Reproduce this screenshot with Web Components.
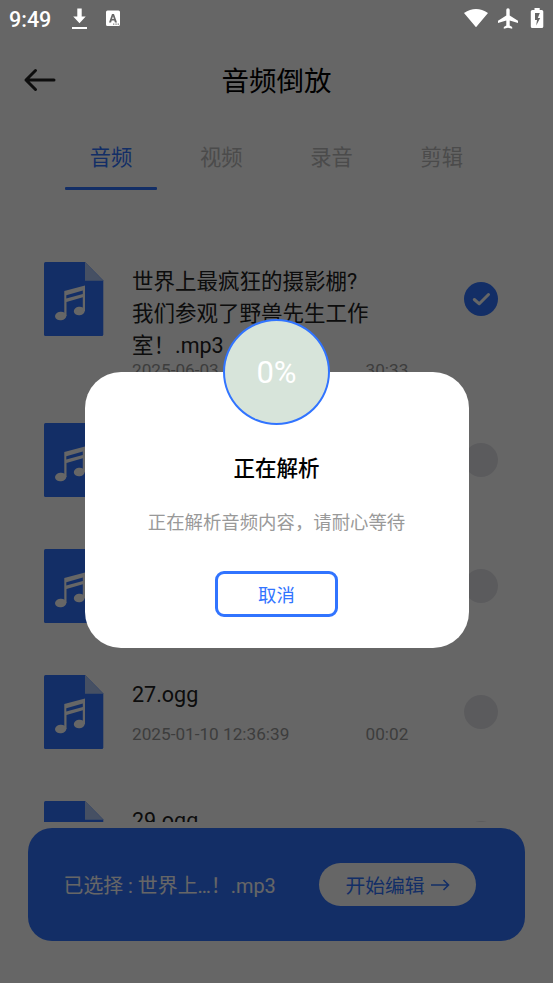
<!DOCTYPE html>
<html lang="zh-CN">
<head>
<meta charset="utf-8">
<title>音频倒放</title>
<style>
body{margin:0;background:#fff}
</style>
</head>
<body>
<audio-app></audio-app>
<script>
const define=(name,html)=>{
  const t=document.createElement('template');
  t.innerHTML=html;
  customElements.define(name,class extends HTMLElement{
    constructor(){super();this.attachShadow({mode:'open'}).appendChild(t.content.cloneNode(true));}
  });
};

define('status-bar',`<style>
:host{display:flex;height:37px;box-sizing:border-box;color:#fff;position:absolute;inset:0 0 auto 0;z-index:3;padding:0 9px 0 9px;font-size:21.5px;font-weight:500;line-height:40px}
span{width:61px;white-space:nowrap}
.gap{flex:1}
svg{display:block;fill:#fff;flex:none}
</style><span>9:49</span>
<svg width="60" height="37" viewBox="0 0 60 37"><path d="M7.300 8.500h4.400v8h4L9.500 23.300 3.200 16.500h4.100zM2 27h15v2H2z"/><path fill-rule="evenodd" d="M37.500 10.500h11q1.500 0 1.500 1.500v12.500q0 1.500-1.500 1.500h-11q-1.500 0-1.500-1.500v-12.500q0-1.500 1.500-1.500zM42 14l-3 8.500h2.100l.6-1.900h2.600l.6 1.900h2.100l-3-8.500zM43 16.200l.9 2.800h-1.800zM43.200 23.500v1.200h1.100v-1.200zM45.500 23.500v1.200h1.100v-1.200zM47.700 23.500v1.200h1.100v-1.200z"/></svg>
<div class="gap"></div>
<svg width="84" height="37" viewBox="460 0 84 37"><path d="M464 13Q476 4.800 488 13L476 27.300zM508 8.200c1.100 0 1.700.8 1.700 1.900v5.500l8.300 5.200v2.100l-8.300-2.500v5l2.500 1.700v1.700l-4.200-1.100-4.200 1.100v-1.700l2.500-1.700v-5l-8.300 2.500v-2.100l8.300-5.200v-5.500c0-1.100.6-1.900 1.700-1.900z"/><path fill-rule="evenodd" d="M534.500 8h5.200v2h2q1.600 0 1.600 1.600V26.400q0 1.600-1.600 1.600h-9.300q-1.600 0-1.600-1.600V11.600q0-1.600 1.600-1.600h2.100zM535 13v7h2l-.8 5.500 4-7.500h-2.400l2-5z"/></svg>`);

define('app-header',`<style>
:host{display:grid;grid-template-columns:80px 1fr 80px;align-items:center;height:86px;padding-top:37px}
h1{margin:0;padding-top:3px;font-size:27.500px;font-weight:400;line-height:40px;text-align:center;color:#000}
svg{display:block}
</style><svg width="80" height="40" viewBox="0 0 80 40" fill="none" stroke="#222" stroke-width="3" stroke-linecap="round" stroke-linejoin="round"><path d="M54 20H26M35.500 10.500L26 20l9.500 9.500"/></svg><h1><slot></slot></h1>`);

define('tab-bar',`<style>:host{display:flex;padding:0 56px;height:80px}</style><slot></slot>`);
define('tab-item',`<style>
:host{display:flex;flex-direction:column;align-items:center;flex:1;font-size:21.300px;line-height:32px;color:#bbb}
:host([active]){color:#3174ff}
i{width:92px;height:3px;margin-top:13px;border-radius:1px}
:host([active]) i{background:#3174ff}
span{margin-top:19px}
</style><span><slot></slot></span><i></i>`);

define('file-list',`<style>:host{display:flex;flex-direction:column;height:619px;overflow:hidden;box-sizing:border-box;padding:59px 55px 0 44px}</style><slot></slot>`);
define('file-icon',`<style>:host{display:block;width:60px;height:75px}svg{display:block}</style>
<svg width="60" height="75" viewBox="0 0 60 75"><path fill="#3174ff" d="M1.500 0H41L59.300 18.500V72.500q0 1.500-1.500 1.500H1.500Q0 74 0 72.500V1.500Q0 0 1.500 0z"/><path fill="#aec8f8" d="M41 0l18.300 18.700H41z"/><ellipse cx="16.700" cy="54" rx="5.700" ry="4.200" transform="rotate(-8 16.700 54)" fill="#fff"/><ellipse cx="35.300" cy="49" rx="5.500" ry="4.200" transform="rotate(-8 35.300 49)" fill="#fff"/><path fill="#fff" fill-rule="evenodd" d="M20.300 29L41 23.500V49h-2.200V35.300l-16.300 4.700V54h-2.200zM22.300 33.300v3.300l16.500-4.700v-3.300z"/></svg>`);
define('check-mark',`<style>:host{display:block;width:34px;height:34px;border-radius:50%;background:#e4e4e9}svg{display:none}:host([checked]){background:#3174ff}:host([checked]) svg{display:block}</style>
<svg width="34" height="34" viewBox="0 0 34 34" fill="none" stroke="#fff" stroke-width="3" stroke-linecap="round" stroke-linejoin="round"><path d="M10.300 17.500l5 4.300L24.500 12.500"/></svg>`);

customElements.define('file-row',class extends HTMLElement{
  connectedCallback(){
    this.attachShadow({mode:'open'}).innerHTML=`<style>
:host{display:grid;grid-template-columns:88px 1fr 34px;min-height:126px;align-items:start;box-sizing:border-box;padding-bottom:44px;flex:none}
.text{padding-top:4px}
.name{font-size:21.500px;line-height:32px;min-height:46px;width:246px;color:#222}
:host([selected]) .name{margin-bottom:-1px}
.meta{display:flex;font-size:17.200px;line-height:18px;min-height:18px;color:#999;white-space:nowrap}
.meta span:first-child{width:233.500px}
check-mark{margin-top:20px}
</style><file-icon></file-icon><div class="text"><div class="name"><slot></slot></div><div class="meta"><span>${this.getAttribute('date')||''}</span><span>${this.getAttribute('length')||''}</span></div></div><check-mark ${this.hasAttribute('selected')?'checked':''}></check-mark>`;
  }
});

define('action-bar',`<style>
:host{display:flex;align-items:center;justify-content:space-between;margin:6px 28px 0;height:113px;box-sizing:border-box;padding:0 49px 0 35.500px;border-radius:24px;background:#3174ff;color:#fff;font-size:19.900px;white-space:nowrap}
button{display:flex;align-items:center;justify-content:center;gap:6px;width:157px;height:43px;padding:0;border:0;border-radius:22px;background:#fff;color:#3174ff;font:inherit;font-size:19.800px}
svg{display:block}
</style><span><slot></slot></span><button>开始编辑<svg width="19" height="14" viewBox="0 0 19 14" fill="none" stroke="#3174ff" stroke-width="1.600"><path d="M0 7h17.500M12.500 2l5 5-5 5"/></svg></button>`);

define('progress-dialog',`<style>
:host{position:absolute;inset:0;z-index:2;background:rgba(0,0,0,.6);display:flex;justify-content:center;align-items:flex-start}
.card{display:flex;flex-direction:column;align-items:center;width:384px;height:276px;margin-top:372px;border-radius:36px;background:#fff}
.ring{box-sizing:border-box;flex:none;width:107px;height:106px;margin-top:-53px;border:2px solid #3174ff;border-radius:50%;background:#d7e4da;color:#fff;display:flex;align-items:center;justify-content:center;font-size:31px}
h2{margin:28px 0 0;font-size:21.500px;line-height:32px;font-weight:500;color:#000}
p{margin:24px 0 0;font-size:18.400px;line-height:28px;color:#999;white-space:nowrap}
button{box-sizing:border-box;width:123px;height:46px;margin-top:34px;padding:0;border:3px solid #3174ff;border-radius:9px;background:#fff;color:#3174ff;font:inherit;font-size:18.400px}
</style><div class="card"><div class="ring"><slot name="progress"></slot></div><h2><slot name="title"></slot></h2><p><slot></slot></p><button>取消</button></div>`);

define('audio-app',`<style>
:host{display:block;position:relative;width:553px;height:983px;overflow:hidden;background:#fff;font-family:Roboto,"Noto Sans CJK SC",sans-serif}
</style>
<status-bar></status-bar>
<app-header>音频倒放</app-header>
<tab-bar><tab-item active>音频</tab-item><tab-item>视频</tab-item><tab-item>录音</tab-item><tab-item>剪辑</tab-item></tab-bar>
<file-list>
<file-row selected date="2025-06-03" length="30:33">世界上最疯狂的摄影棚?<br>我们参观了野兽先生工作室！.mp3</file-row>
<file-row></file-row>
<file-row></file-row>
<file-row date="2025-01-10 12:36:39" length="00:02">27.ogg</file-row>
<file-row>29.ogg</file-row>
</file-list>
<action-bar>已选择 : 世界上…！.mp3</action-bar>
<progress-dialog><span slot="progress">0%</span><span slot="title">正在解析</span>正在解析音频内容，请耐心等待</progress-dialog>`);
</script>
</body>
</html>
